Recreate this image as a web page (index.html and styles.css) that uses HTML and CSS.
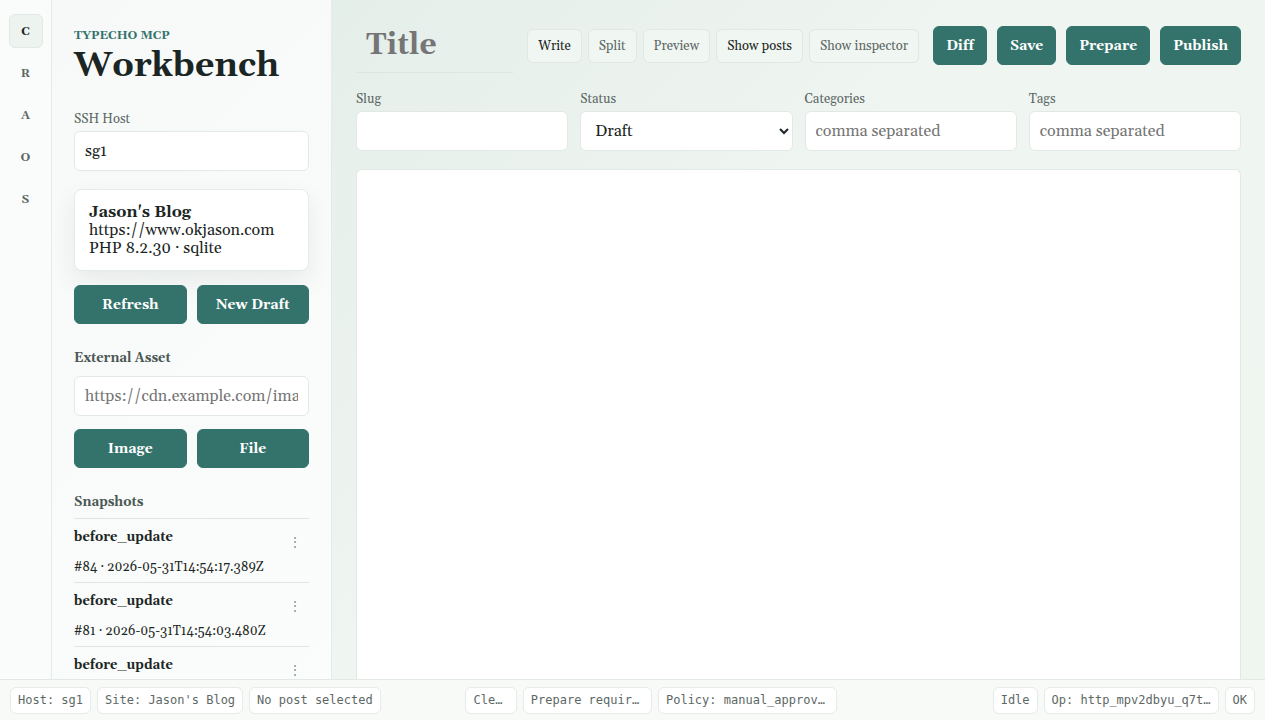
FILE: index.html
```html
<!DOCTYPE html>
<html lang="en">
<head>
    <meta charset="UTF-8">
    <meta name="viewport" content="width=device-width, initial-scale=1.0">
    <title>Workbench</title>
    <link rel="stylesheet" href="styles.css">
</head>
<body>
    <div class="shell">
        <nav class="rail">
            <button type="button" class="active">C</button>
            <button type="button">R</button>
            <button type="button">A</button>
            <button type="button">O</button>
            <button type="button">S</button>
        </nav>

        <aside class="sidebar">
            <header class="brand">
                <p>TYPECHO MCP</p>
                <h1>Workbench</h1>
            </header>
            <div class="field host-field">
                <label for="sshHost">SSH Host</label>
                <input type="text" id="sshHost" value="sg1">
            </div>
            <div class="site-card">
                <strong>Jason's Blog</strong>
                <span>https://www.okjason.com</span>
                <span>PHP 8.2.30 · sqlite</span>
            </div>
            <div class="button-row">
                <button type="button" class="primary">Refresh</button>
                <button type="button" class="primary">New Draft</button>
            </div>
            <section class="asset">
                <h2><label for="assetUrl">External Asset</label></h2>
                <input type="text" id="assetUrl" placeholder="https://cdn.example.com/image.png">
                <div class="button-row">
                    <button type="button" class="primary">Image</button>
                    <button type="button" class="primary">File</button>
                </div>
            </section>
            <section class="snapshots">
                <h2>Snapshots</h2>
                <ul>
                    <li>
                        <div><strong>before_update</strong><small>#84 · 2026-05-31T14:54:17.389Z</small></div>
                        <button type="button" class="more">⋮</button>
                    </li>
                    <li>
                        <div><strong>before_update</strong><small>#81 · 2026-05-31T14:54:03.480Z</small></div>
                        <button type="button" class="more">⋮</button>
                    </li>
                    <li>
                        <div><strong>before_update</strong></div>
                        <button type="button" class="more">⋮</button>
                    </li>
                </ul>
            </section>
        </aside>

        <main class="editor">
            <div class="topbar">
                <input type="text" class="title-input" placeholder="Title" aria-label="Title">
                <div class="toggles">
                    <button type="button" class="active">Write</button>
                    <button type="button">Split</button>
                    <button type="button">Preview</button>
                    <button type="button" class="active">Show posts</button>
                    <button type="button">Show inspector</button>
                </div>
                <div class="actions">
                    <button type="button" class="primary">Diff</button>
                    <button type="button" class="primary">Save</button>
                    <button type="button" class="primary">Prepare</button>
                    <button type="button" class="primary">Publish</button>
                </div>
            </div>
            <div class="meta">
                <div class="field">
                    <label for="slug">Slug</label>
                    <input type="text" id="slug">
                </div>
                <div class="field">
                    <label for="status">Status</label>
                    <select id="status">
                        <option>Draft</option>
                    </select>
                </div>
                <div class="field">
                    <label for="categories">Categories</label>
                    <input type="text" id="categories" placeholder="comma separated">
                </div>
                <div class="field">
                    <label for="tags">Tags</label>
                    <input type="text" id="tags" placeholder="comma separated">
                </div>
            </div>
            <textarea class="content" aria-label="Content"></textarea>
        </main>
    </div>

    <footer class="statusbar">
        <div class="chips">
            <span>Host: sg1</span>
            <span>Site: Jason's Blog</span>
            <span>No post selected</span>
        </div>
        <div class="chips">
            <span>Clean</span>
            <span>Prepare required</span>
            <span>Policy: manual_approval</span>
        </div>
        <div class="chips end">
            <span>Idle</span>
            <span>Op: http_mpv2dbyu_q7t…</span>
            <span>OK</span>
        </div>
    </footer>
</body>
</html>
```

FILE: styles.css
```css
* {
    box-sizing: border-box;
}
body {
    margin: 0;
    height: 100vh;
    display: flex;
    flex-direction: column;
    overflow: hidden;
    font-family: Georgia, Gelasio, "Liberation Serif", serif;
    font-size: 16px;
    color: #1b2624;
    background: linear-gradient(135deg, #dfebe6 0%, #eff5f1 50%, #eff5ef 100%);
}
button, input, select, textarea {
    font: inherit;
    color: inherit;
}
h1, h2, p, ul {
    margin: 0;
    padding: 0;
}
.shell {
    flex: 1;
    min-height: 0;
    display: grid;
    grid-template-columns: 52px 280px minmax(0, 1fr);
}

/* left rail */
.rail {
    display: flex;
    flex-direction: column;
    align-items: center;
    gap: 8px;
    padding-top: 14px;
    background: #fafcfb;
    border-right: 1px solid #e5ebe8;
}
.rail button {
    width: 34px;
    height: 34px;
    padding: 0;
    border: 1px solid transparent;
    border-radius: 6px;
    background: none;
    color: #5d6865;
    font-size: 12px;
    font-weight: bold;
}
.rail button.active {
    background: #edf3ee;
    border-color: #e2e9e4;
    color: #1b2624;
}

/* sidebar */
.sidebar {
    padding: 29px 22px 0;
    overflow: hidden;
    background: linear-gradient(135deg, #f6f9f8, #fbfdfc);
    border-right: 1px solid #e5ebe8;
}
.brand p {
    color: #33736b;
    font-size: 12px;
    font-weight: bold;
    line-height: 14px;
}
.brand h1 {
    font-size: 34px;
    line-height: 46px;
}
.field {
    display: flex;
    flex-direction: column;
    gap: 4px;
    min-width: 0;
}
.field label {
    color: #5d6865;
    font-size: 13px;
    line-height: 16px;
}
.host-field {
    margin-top: 22px;
}
.field input, .field select, .asset input {
    width: 100%;
    height: 40px;
    padding: 0 10px;
    border: 1px solid #e2e9e4;
    border-radius: 6px;
    background: #fff;
}
.site-card {
    display: flex;
    flex-direction: column;
    margin: 18px 0 14px;
    padding: 13px 14px;
    border: 1px solid #e5ebe8;
    border-radius: 8px;
    background: #fff;
    line-height: 18px;
    box-shadow: 0 10px 24px rgba(27, 38, 36, 0.08);
}
.button-row {
    display: grid;
    grid-template-columns: 1fr 1fr;
    gap: 10px;
}
.primary {
    height: 39px;
    padding: 0 12px;
    border: 1px solid #33736b;
    border-radius: 6px;
    background: #33736b;
    color: #fff;
    font-size: 14px;
    font-weight: bold;
}
.sidebar h2 {
    color: #4b5754;
    font-size: 13px;
    line-height: 16px;
}
.asset {
    margin-top: 26px;
}
.asset input {
    margin: 10px 0 13px;
}
.snapshots {
    margin-top: 26px;
}
.snapshots ul {
    margin-top: 8px;
    list-style: none;
}
.snapshots li {
    display: flex;
    justify-content: space-between;
    height: 64px;
    padding-top: 9px;
    border-top: 1px solid #dfe5e2;
}
.snapshots strong, .snapshots small {
    display: block;
    line-height: 18px;
    font-size: 13px;
}
.snapshots small {
    margin-top: 12px;
}
.more {
    width: 28px;
    height: 28px;
    padding: 0;
    border: 0;
    background: none;
    color: #7d8885;
    font-size: 12px;
}

/* editor */
.editor {
    display: flex;
    flex-direction: column;
    padding: 18px 24px 0;
    min-width: 0;
}
.topbar {
    display: flex;
    align-items: center;
    gap: 14px;
}
.title-input {
    flex: 1;
    min-width: 0;
    height: 55px;
    padding: 0 10px;
    border: 0;
    border-bottom: 1px solid #dde6e1;
    background: none;
    font-size: 30px;
    font-weight: bold;
}
.toggles {
    display: flex;
    gap: 6px;
}
.toggles button {
    height: 34px;
    padding: 0 10px;
    border: 1px solid #e0e8e2;
    border-radius: 6px;
    background: #f0f6f2;
    color: #5d6865;
    font-size: 13px;
}
.toggles button.active {
    color: #1b2624;
}
.actions {
    display: flex;
    gap: 10px;
}
.meta {
    display: grid;
    grid-template-columns: repeat(4, minmax(0, 1fr));
    gap: 12px;
    margin: 18px 0;
}
.content {
    flex: 1;
    width: 100%;
    border: 1px solid #e2e9e4;
    border-bottom: 0;
    border-radius: 6px 6px 0 0;
    background: #fff;
    resize: none;
}

/* status bar */
.statusbar {
    display: grid;
    grid-template-columns: 1.2fr 1fr 1.1fr;
    align-items: center;
    gap: 10px;
    height: 41px;
    padding: 0 10px;
    border-top: 1px solid #e2e8e4;
    background: #f7faf7;
    color: #5d6865;
    font-family: "DejaVu Sans Mono", monospace;
    font-size: 12px;
}
.chips {
    display: flex;
    gap: 6px;
    min-width: 0;
}
.chips.end {
    justify-content: flex-end;
}
.chips span {
    padding: 0 7px;
    border: 1px solid #e5ebe8;
    border-radius: 6px;
    background: #fff;
    line-height: 25px;
    white-space: nowrap;
    overflow: hidden;
    text-overflow: ellipsis;
}
```
